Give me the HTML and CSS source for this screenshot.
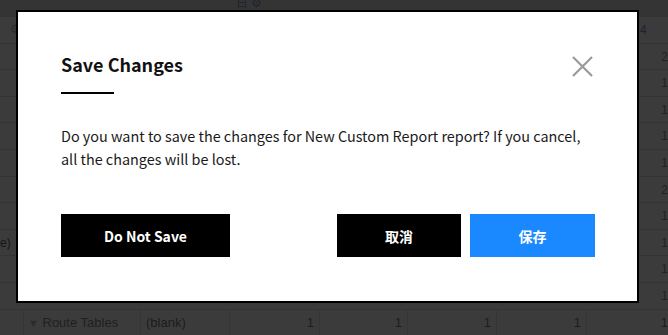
FILE: index.html
```html
<!DOCTYPE html>
<html lang="en">
<head>
  <meta charset="UTF-8" />
  <meta name="viewport" content="width=device-width, initial-scale=1.0"/>
  <title>Save Changes</title>
  <link rel="stylesheet" href="styles.css">
</head>
<body>
  <div class="report">
    <div class="toolbar"><span class="tool-icons">&#x65E5; &#x2699;</span></div>
    <div class="row"><span class="gear">&#x2699;</span><span class="mid">4</span></div>
    <div class="row"><span class="edge">2</span></div>
    <div class="row"><span class="edge">1</span></div>
    <div class="row"><span class="edge">1</span></div>
    <div class="row"><span class="edge">1</span></div>
    <div class="row"><span class="edge">1</span></div>
    <div class="row"><span class="edge">2</span></div>
    <div class="row"><span class="edge">1</span></div>
    <div class="row"><span class="left-cut">e)</span><span class="edge">1</span></div>
    <div class="row"><span class="edge">1</span></div>
    <div class="row"><span class="edge">1</span></div>
    <div class="row cells">
      <span class="c0"></span>
      <span class="c1"><i class="caret">&#x25BC;</i> Route Tables</span>
      <span class="c2">(blank)</span>
      <span class="num w90">1</span>
      <span class="num w88">1</span>
      <span class="num w89">1</span>
      <span class="num w90">1</span>
      <span class="num last">1</span>
    </div>
  </div>

  <div class="modal">
    <div class="modal-head">
      <h2>Save Changes</h2>
      <button class="close" aria-label="Close">
        <svg width="21" height="21" viewBox="0 0 21 21"><path d="M1 1 L20 20 M20 1 L1 20" stroke="#9a9a9a" stroke-width="2.2"/></svg>
      </button>
    </div>
    <div class="bar"></div>
    <p class="message">Do you want to save the changes for New Custom Report report? If you cancel, all the changes will be lost.</p>
    <div class="actions">
      <button class="btn dark">Do Not Save</button>
      <div class="right">
        <button class="btn dark small">取消</button>
        <button class="btn blue small">保存</button>
      </div>
    </div>
  </div>
</body>
</html>
```

FILE: styles.css
```css
body {
  margin: 0;
  background-color: #3b3b3b;
  font-family: Arial, "Liberation Sans", sans-serif;
  overflow: hidden;
  height: 335px;
}

.report {
  color: #161616;
  font-size: 12px;
}

.toolbar {
  height: 17px;
  background-color: #343434;
  position: relative;
}

.tool-icons {
  position: absolute;
  left: 236px;
  top: -5px;
  color: #1c2430;
  font-size: 12px;
}

.row {
  height: 25.6px;
  border-bottom: 1px solid #343434;
  position: relative;
}

.gear {
  position: absolute;
  left: 10px;
  top: 5px;
  color: #2c2c2c;
}

.mid {
  position: absolute;
  left: 640px;
  top: 6px;
  color: #1c2430;
}

.edge {
  position: absolute;
  right: 0;
  top: 6px;
  color: #222;
}

.left-cut {
  position: absolute;
  left: 0;
  top: 6px;
}

.cells {
  display: flex;
  border-bottom: none;
  height: 26px;
}

.cells span {
  border-right: 1px solid #353535;
  line-height: 26px;
  padding: 0 5px;
  box-sizing: border-box;
  font-size: 13px;
  color: #1c1c1c;
}

.caret {
  font-style: normal;
  font-size: 11px;
  color: #2a2a2a;
}

.c0 { width: 24px; }
.c1 { width: 117px; padding-left: 4px !important; color: #202020 !important; }
.c2 { width: 89px; }
.num { text-align: right; }
.w90 { width: 90px; }
.w88 { width: 88px; }
.w89 { width: 89px; }
.last { width: 81px; padding-right: 0 !important; border-right: none !important; }

.modal {
  position: absolute;
  left: 16px;
  top: 10px;
  width: 623px;
  height: 293px;
  box-sizing: border-box;
  background-color: #fff;
  border: 2px solid #000;
  padding: 40px 42px 0 43px;
  font-family: "Noto Sans CJK KR", "Noto Sans", sans-serif;
  color: #1a1a1a;
}

.modal-head {
  display: flex;
  justify-content: space-between;
  align-items: flex-start;
}

.modal-head h2 {
  margin: 0;
  font-size: 18px;
  line-height: 24px;
  font-weight: 700;
  color: #111;
}

.close {
  border: none;
  background: none;
  padding: 0;
  margin-top: 4px;
  margin-right: 2px;
  width: 21px;
  height: 21px;
  cursor: pointer;
}

.bar {
  width: 53px;
  height: 2px;
  background-color: #000;
  margin-top: 15px;
}

.message {
  margin: 30px 0 0;
  font-size: 14.4px;
  line-height: 23px;
  color: #1a1a1a;
}

.actions {
  display: flex;
  justify-content: space-between;
  margin-top: 44px;
}

.right {
  display: flex;
  gap: 9px;
}

.btn {
  height: 43px;
  border: none;
  color: #fff;
  font-family: "Noto Sans CJK KR", "Noto Sans", sans-serif;
  font-size: 14px;
  font-weight: 700;
  cursor: pointer;
  width: 169px;
}

.small {
  width: 124px;
}

.dark {
  background-color: #000;
}

.blue {
  background-color: #1a88ff;
  width: 125px;
}
```
